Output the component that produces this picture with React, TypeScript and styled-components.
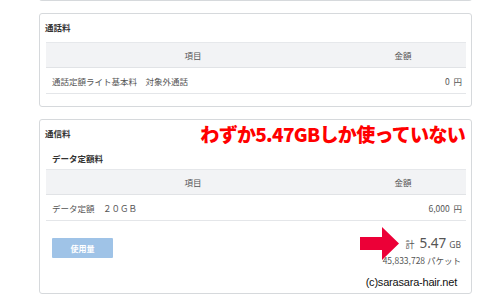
import React from "react";
import styled, { createGlobalStyle } from "styled-components";

// Styles
const GlobalStyle = createGlobalStyle`
  html, body {
    margin: 0;
    padding: 0;
    background: #fff;
  }
  body {
    font-family: "Noto Sans CJK JP", "Noto Sans", sans-serif;
    color: #555;
    overflow: hidden;
  }
`;

const Page = styled.div`
  width: 433px;
  margin-left: 39px;
  display: flex;
  flex-direction: column;
  gap: 12px;
`;

const Card = styled.section<{ $cut?: boolean; $tight?: boolean }>`
  position: relative;
  border: 1px solid #d6d9dc;
  border-radius: 3px;
  background: #fff;
  padding: 6px 5px ${(p) => (p.$tight ? "4px" : "12px")} 5px;
  ${(p) => p.$cut && "padding: 0; margin-top: -9px; border-top: none; height: 9px;"}
`;

const CardTitle = styled.h3`
  margin: 0;
  font-size: 8.5px;
  font-weight: bold;
  color: #333;
  line-height: 14px;
  height: 22px;
`;

const SubTitle = styled.h4`
  margin: 0;
  padding-left: 7px;
  font-size: 8.5px;
  font-weight: bold;
  color: #333;
  line-height: 14px;
  height: 18px;
  padding-top: 3px;
`;

const Table = styled.table`
  width: 420px;
  margin-left: 1px;
  border-collapse: collapse;
  font-size: 8.5px;
`;

const Th = styled.th<{ $w: string }>`
  width: ${(p) => p.$w};
  height: 24px;
  padding: 0;
  background: #f2f3f5;
  border-top: 1px solid #e6e8eb;
  border-bottom: 1px solid #e1e3e6;
  font-weight: normal;
  color: #555;
  text-align: center;
`;

const Td = styled.td<{ $right?: boolean }>`
  height: 25px;
  padding: 0 4px 0 6px;
  border-bottom: 1px solid #e4e6e9;
  text-align: ${(p) => (p.$right ? "right" : "left")};
  color: #555;
  white-space: pre;
`;

const Footer = styled.div`
  display: flex;
  justify-content: space-between;
  align-items: flex-start;
  padding: 17px 5px 0 7px;
`;

const UsageButton = styled.button`
  width: 61px;
  height: 20px;
  border: none;
  border-radius: 1px;
  background: #9fc3e7;
  color: #fff;
  font-family: inherit;
  font-size: 8px;
  font-weight: bold;
  padding: 0;
`;

const Total = styled.div`
  display: flex;
  flex-direction: column;
  align-items: flex-end;
  margin-top: -4px;
`;

const TotalLine = styled.div`
  display: flex;
  align-items: baseline;
  gap: 5px;
  color: #555;
  font-size: 9px;
  line-height: 18px;
`;

const Big = styled.span`
  font-family: "Noto Sans", sans-serif;
  font-size: 13.5px;
`;

const Small = styled.span`
  font-family: "Noto Sans", sans-serif;
  font-size: 8.5px;
  margin-left: -2px;
`;

const Packets = styled.div`
  font-size: 8.5px;
  line-height: 12px;
  color: #555;
`;

const Credit = styled.div`
  display: flex;
  justify-content: flex-end;
  padding: 9px 9px 0 0;
  font-family: "Liberation Sans", sans-serif;
  font-size: 11px;
  line-height: 14px;
  color: #111;
  letter-spacing: -0.2px;
`;

const Callout = styled.div`
  position: absolute;
  top: 2px;
  right: 6px;
  color: #f00;
  font-size: 19px;
  font-weight: 900;
  letter-spacing: -0.7px;
  line-height: 24px;
`;

const Arrow = styled.svg`
  position: absolute;
  left: 320px;
  top: 107px;
`;

interface Row {
  item: string;
  amount: string;
}

const FeeTable = ({ rows }: { rows: Row[] }) => (
  <Table>
    <thead>
      <tr>
        <Th $w="294px">項目</Th>
        <Th $w="126px">金額</Th>
      </tr>
    </thead>
    <tbody>
      {rows.map((r) => (
        <tr key={r.item}>
          <Td>{r.item}</Td>
          <Td $right>{r.amount}</Td>
        </tr>
      ))}
    </tbody>
  </Table>
);

export default function App() {
  return (
    <>
      <GlobalStyle />
      <Page>
        <Card $cut />
        <Card>
          <CardTitle>通話料</CardTitle>
          <FeeTable rows={[{ item: "通話定額ライト基本料　対象外通話", amount: "0  円" }]} />
        </Card>
        <Card $tight>
          <CardTitle>通信料</CardTitle>
          <SubTitle>データ定額料</SubTitle>
          <FeeTable rows={[{ item: "データ定額　２０ＧＢ", amount: "6,000  円" }]} />
          <Footer>
            <UsageButton>使用量</UsageButton>
            <Total>
              <TotalLine>
                計 <Big>5.47</Big> <Small>GB</Small>
              </TotalLine>
              <Packets>45,833,728 パケット</Packets>
            </Total>
          </Footer>
          <Credit>(c)sarasara-hair.net</Credit>
          <Callout>わずか5.47GBしか使っていない</Callout>
          <Arrow width="39" height="33" viewBox="0 0 39 33">
            <path d="M0 10 H22 V0 L39 16.5 L22 33 V23 H0 Z" fill="#ec0037" />
          </Arrow>
        </Card>
      </Page>
    </>
  );
}
